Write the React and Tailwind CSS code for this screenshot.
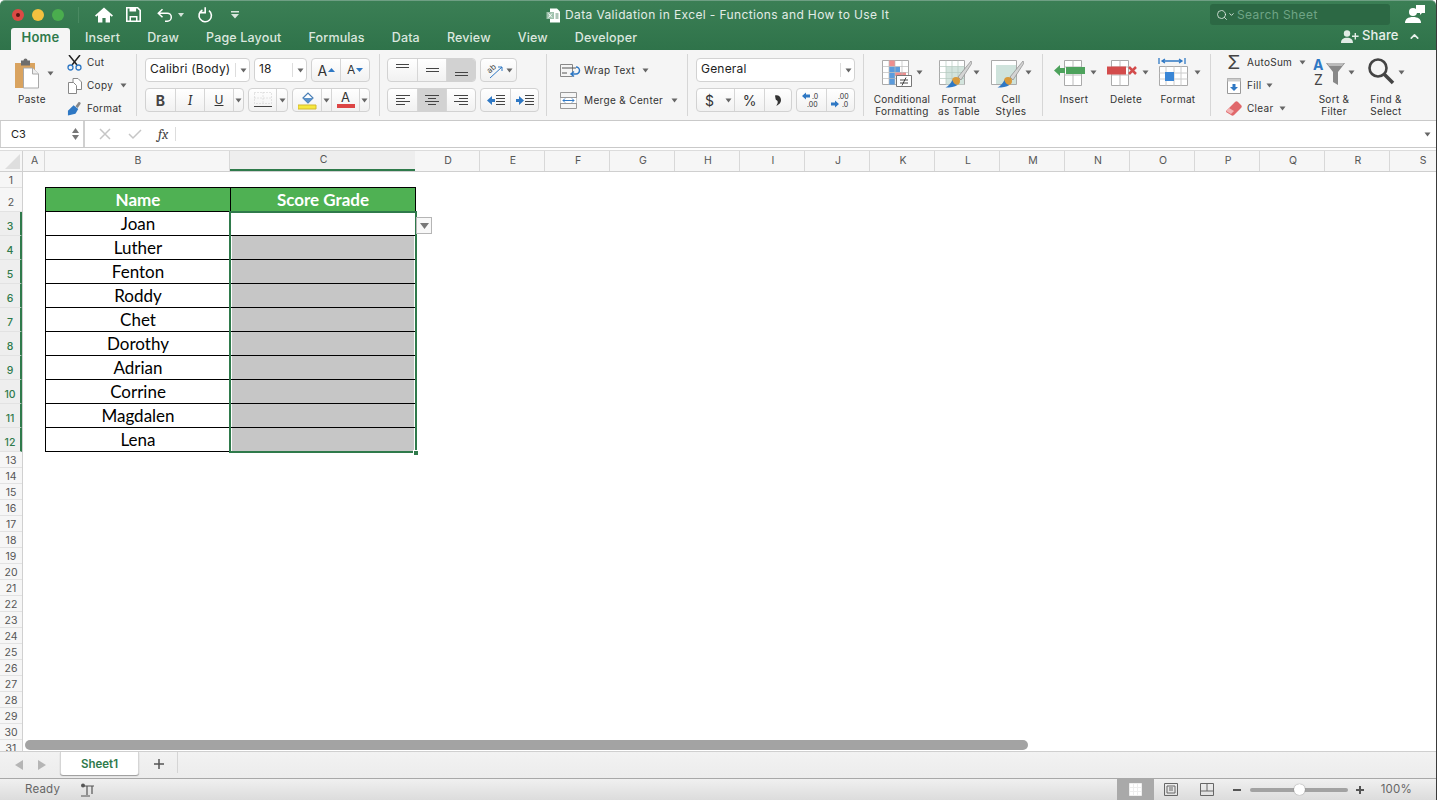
import React from 'react';
import { ChevronUp, Search, ChevronDown } from 'lucide-react';

const names = ['Joan', 'Luther', 'Fenton', 'Roddy', 'Chet', 'Dorothy', 'Adrian', 'Corrine', 'Magdalen', 'Lena'];
const tabs = ['Insert', 'Draw', 'Page Layout', 'Formulas', 'Data', 'Review', 'View', 'Developer'];
const narrowCols = ['D', 'E', 'F', 'G', 'H', 'I', 'J', 'K', 'L', 'M', 'N', 'O', 'P', 'Q', 'R', 'S'];
const rows = Array.from({ length: 31 }, (_, i) => i + 1);

const Caret = ({ className = '' }) => (
  <svg width="7" height="5" viewBox="0 0 7 5" className={className}>
    <path d="M0.5 0.5h6L3.5 4.5z" fill="#666" />
  </svg>
);

const Seg = ({ children, className = '' }) => (
  <div className={`flex items-center justify-center h-full border-l border-[#d6d6d6] first:border-l-0 ${className}`}>{children}</div>
);

const Group = ({ children, className = '' }) => (
  <div className={`flex h-[24px] rounded-[4px] border border-[#d2d2d2] bg-gradient-to-b from-white to-[#f1f1f1] overflow-hidden ${className}`}>{children}</div>
);

const Select = ({ label, className = '' }) => (
  <div className={`flex items-center h-[24px] rounded-[4px] border border-[#d2d2d2] bg-white pl-[4px] text-[12px] tracking-[0.2px] text-[#222] ${className}`}>
    <span className="flex-1 pb-[2px]">{label}</span>
    <div className="flex items-center justify-center w-[14px] h-[14px] border-l border-[#ddd]"><Caret className="ml-[2px]" /></div>
  </div>
);

const Lines = ({ rowsOf }) => (
  <svg width="16" height="14" viewBox="0 0 16 14" stroke="#444" strokeWidth="1">
    {rowsOf.map((r, i) => <path key={i} d={`M${r[0]} ${i * 3 + 2.5}H${r[1]}`} />)}
  </svg>
);

const SmallTool = ({ icon, label, caret }) => (
  <div className="flex items-center h-[23px] shrink-0">
    <div className="flex justify-center w-[15px]">{icon}</div>
    <span className="ml-[5px] text-[10px] tracking-[0.3px] text-[#333]">{label}</span>
    {caret && <Caret className="ml-[7px]" />}
  </div>
);

const BigTool = ({ icon, label, width, gap = 'ml-[3px]' }) => (
  <div className={`flex flex-col items-center ${width}`}>
    <div className="flex items-center h-[36px] shrink-0">
      {icon}
      <Caret className={gap} />
    </div>
    <div className="mt-[3px] shrink-0 text-center text-[10px] leading-[12px] tracking-[0.3px] text-[#333] whitespace-pre">{label}</div>
  </div>
);

const MiniGrid = ({ width = 36, children }) => (
  <svg width={width} height="32" viewBox={`0 0 ${width} 32`}>{children}</svg>
);

const TitleBar = () => (
  <div className="flex items-center h-[27px] relative">
    <div className="flex items-center gap-[8px] pl-[12px]">
      <div className="flex items-center justify-center w-[12px] h-[12px] rounded-full bg-[#dd4a45]"><div className="w-[4px] h-[4px] rounded-full bg-[#5a1513]" /></div>
      <div className="w-[12px] h-[12px] rounded-full bg-[#f4c13f]" />
      <div className="w-[12px] h-[12px] rounded-full bg-[#4aad4e]" />
    </div>
    <div className="ml-[14px] h-[16px] border-l border-[#4a8a62]" />
    <svg width="18" height="16" viewBox="0 0 18 16" className="ml-[16px]" fill="#fff">
      <path d="M9 .5L0 8.5l1.2 1.2L3 8.2V15.5h4.4v-4.600h3.200v4.600H15V8.200l1.800 1.500L18 8.500z" />
    </svg>
    <svg width="15" height="15" viewBox="0 0 15 15" className="ml-[13px]">
      <path d="M.8.8h10.800L14.200 3.400v10.800H.8z" fill="none" stroke="#fff" strokeWidth="1.600" />
      <path d="M3.500 1h6.600v3.600H3.500zM3.500 9h8v5h-8z" fill="#fff" />
      <path d="M5 10.500h5v3H5z" fill="#357a4f" />
    </svg>
    <svg width="16" height="14" viewBox="0 0 16 14" className="ml-[16px]" fill="none" stroke="#fff" strokeWidth="1.500">
      <path d="M5.500 1.200L1.300 5.200l4.200 4M1.500 5.200h8.800a4 4 0 0 1 0 8H8" />
    </svg>
    <svg width="6" height="4" viewBox="0 0 6 4" className="ml-[5px]"><path d="M0 0h6L3 4z" fill="#d5e3da" /></svg>
    <svg width="16" height="16" viewBox="0 0 16 16" className="ml-[13px]" fill="none" stroke="#fff" strokeWidth="1.600">
      <path d="M5.400 3A6.200 6.200 0 1 0 12 3.600M8.200 .2v5.400H2.800" />
    </svg>
    <svg width="8" height="8" viewBox="0 0 8 8" className="ml-[18px]" fill="#d9e6de"><path d="M0 0h8v1.400H0zM0 3h8L4 7.500z" /></svg>

    <div className="absolute left-[546px] top-[5px] flex items-center">
      <svg width="15" height="15" viewBox="0 0 15 15" className="mr-[4px]">
        <path d="M4 .5h7l3 3v11H4z" fill="#fff" />
        <path d="M.5 4h7.500v7H.5z" fill="#9fc2ad" />
        <path d="M2.500 5.500l3.500 4M6 5.500l-3.500 4" stroke="#fff" />
        <path d="M9.500 6h3M9.500 8h3M9.500 10h3" stroke="#5d8a70" />
      </svg>
      <span className="text-[12px] tracking-[0.38px] text-[#e2ece6]">Data Validation in Excel - Functions and How to Use It</span>
    </div>

    <div className="absolute left-[1210px] top-[3px] flex items-center w-[180px] h-[21px] rounded-[3px] bg-[#2c6844] pl-[6px]">
      <Search size={12} color="#e8f0eb" strokeWidth={1.600} />
      <ChevronDown size={7} color="#e8f0eb" strokeWidth={3} />
      <span className="ml-[2px] text-[12px] tracking-[0.4px] text-[#6fa586]">Search Sheet</span>
    </div>
    <svg width="20" height="19" viewBox="0 0 20 19" className="absolute left-[1405px] top-[4px]" fill="#fff">
      <path d="M11 0h9v8h-3l-2 2V8h-4z" />
      <circle cx="8" cy="7" r="4" />
      <path d="M0 18c0-4 3-6 8-6s8 2 8 6z" />
    </svg>
  </div>
);

const TabRow = () => (
  <div className="flex items-end h-[22px] pl-[11px] relative">
    <div className="flex items-center justify-center w-[59px] h-[22px] pb-[2px] rounded-t-[3px] bg-[#f5f5f5] text-[13px] font-semibold tracking-[0.2px] text-[#2f7a4b]">Home</div>
    <div className="flex items-center h-[22px] pb-[2px] ml-[15px] gap-[27px] text-[12.5px] font-medium tracking-[0.15px] text-[#dbe7df]">
      {tabs.map((t) => <span key={t}>{t}</span>)}
    </div>
    <div className="absolute left-[1341px] top-[-2px] flex items-center h-[20px] text-[13px] font-medium tracking-[0.1px] text-[#e8f0eb]">
      <svg width="18" height="13" viewBox="0 0 18 13" className="mr-[3px]" fill="#e2ece6">
        <circle cx="6" cy="3.500" r="3.200" />
        <path d="M0 13c0-3.600 2.400-5.200 6-5.200s6 1.600 6 5.200zM13.600 3h1.400v2.600h2.600v1.400H15v2.600h-1.400V7H11V5.600h2.600z" />
      </svg>
      <span>Share</span>
      <ChevronUp size={13} strokeWidth={3} color="#e8f0eb" className="ml-[9px]" />
    </div>
  </div>
);

const Clipboard = () => (
  <div className="flex w-[137px] h-[62px] mt-[4px] border-r border-[#d6d6d6]">
    <div className="flex flex-col w-[59px] pl-[14px]">
      <div className="flex items-center h-[34px] mt-[2px] shrink-0">
        <svg width="28" height="31" viewBox="0 0 28 31">
          <path d="M1 5h20v25H1z" fill="#d9a35f" />
          <path d="M7 2.500h2.500a2 2 0 0 1 4 0H16v5H7z" fill="#6d6d6d" />
          <path d="M9.500 10h9l6 6v14h-15z" fill="#fff" stroke="#a9a9a9" />
          <path d="M18.500 10v6h6" fill="#eee" stroke="#a9a9a9" />
        </svg>
        <Caret className="ml-[5px]" />
      </div>
      <span className="mt-[3px] ml-[4px] text-[10px] leading-[12px] tracking-[0.3px] text-[#333]">Paste</span>
    </div>
    <div className="flex flex-col ml-[8px] mt-[-3px]">
      <SmallTool label="Cut" icon={
        <svg width="15" height="16" viewBox="0 0 15 16" fill="none">
          <path d="M2 0l8 10M13 0L5 10" stroke="#222" strokeWidth="1.500" />
          <circle cx="3.500" cy="12.500" r="2.500" stroke="#2f78c4" strokeWidth="1.300" />
          <circle cx="11.500" cy="12.500" r="2.500" stroke="#2f78c4" strokeWidth="1.300" />
        </svg>
      } />
      <SmallTool label="Copy" caret icon={
        <svg width="14" height="16" viewBox="0 0 14 16" fill="#fff" stroke="#888">
          <path d="M5 .5h5l3.500 3.500v7.500H5z" />
          <path d="M.5 4.500h5l3 3v8h-8z" />
        </svg>
      } />
      <SmallTool label="Format" icon={
        <svg width="16" height="15" viewBox="0 0 16 15">
          <path d="M9 5l3-4c1-1 3 0 2.500 1.500L11.500 7z" fill="#888" />
          <path d="M1 10l6-6 5 4-3 5-8 2z" fill="#2f78c4" />
        </svg>
      } />
    </div>
  </div>
);

const FontGroup = () => (
  <div className="flex flex-col gap-[6px] w-[243px] h-[62px] mt-[4px] pt-[4px] pl-[8px] border-r border-[#d6d6d6]">
    <div className="flex gap-[4px]">
      <Select label="Calibri (Body)" className="w-[105px]" />
      <Select label="18" className="w-[53px]" />
      <Group className="w-[59px]">
        <Seg className="w-[29px] text-[14px] text-[#333]">A<svg width="7" height="4" viewBox="0 0 7 4" className="ml-[1px]"><path d="M0 4L3.500 0 7 4z" fill="#2f78c4" /></svg></Seg>
        <Seg className="w-[29px] text-[12px] text-[#333]">A<svg width="7" height="4" viewBox="0 0 7 4" className="ml-[1px]"><path d="M0 0l3.500 4L7 0z" fill="#2f78c4" /></svg></Seg>
      </Group>
    </div>
    <div className="flex">
      <Group className="w-[99px]">
        <Seg className="w-[29px] text-[14px] font-bold text-[#444]">B</Seg>
        <Seg className="w-[29px] text-[14px] italic font-serif text-[#333]">I</Seg>
        <Seg className="w-[29px] text-[12px] underline text-[#333]">U</Seg>
        <Seg className="flex-1"><Caret /></Seg>
      </Group>
      <Group className="w-[40px] ml-[4px]">
        <Seg className="w-[27px]">
          <svg width="18" height="16" viewBox="0 0 18 16">
            <path d="M.5 .5h17v11H.5zM9 .5v11M.5 6h17" fill="none" stroke="#ccc" strokeDasharray="1 2" />
            <path d="M0 14.500h18" stroke="#444" />
          </svg>
        </Seg>
        <Seg className="flex-1"><Caret /></Seg>
      </Group>
      <Group className="w-[78px] ml-[4px]">
        <Seg className="w-[28px]">
          <svg width="19" height="19" viewBox="0 0 19 19">
            <path d="M5 7l5-5 5 5-5 5z" fill="#fff" stroke="#4a7fb5" strokeWidth="1.200" />
            <path d="M5 7h10l-5 5z" fill="#5b92c9" />
            <path d="M0 14h18v4H0z" fill="#f6e83c" stroke="#d4b92e" />
          </svg>
        </Seg>
        <Seg className="w-[10px]"><Caret /></Seg>
        <Seg className="w-[28px] relative">
          <span className="text-[13px] leading-[13px] mb-[6px] text-[#333]">A</span>
          <div className="absolute left-[5px] bottom-[3px] w-[18px] h-[4px] bg-[#dc4444]" />
        </Seg>
        <Seg className="flex-1"><Caret /></Seg>
      </Group>
    </div>
  </div>
);

const AlignGroup = () => (
  <div className="flex flex-col gap-[6px] w-[167px] h-[62px] mt-[4px] pt-[4px] pl-[7px] border-r border-[#d6d6d6]">
    <div className="flex gap-[4px]">
      <Group className="w-[89px]">
        <Seg className="w-[29px] !items-start pt-[5px]"><svg width="13" height="5"><path d="M0 .5h13M0 3.500h13" stroke="#444" /></svg></Seg>
        <Seg className="w-[29px]"><svg width="13" height="5"><path d="M0 .5h13M0 3.500h13" stroke="#444" /></svg></Seg>
        <Seg className="flex-1 !items-end pb-[4px] bg-[#d2d2d2]"><svg width="13" height="5"><path d="M0 .5h13M0 3.500h13" stroke="#444" /></svg></Seg>
      </Group>
      <Group className="w-[37px]">
        <div className="flex items-center justify-center w-full gap-[3px]">
          <svg width="18" height="18" viewBox="0 0 18 18" fill="none">
            <text x="2" y="10" transform="rotate(-40 7 8)" fontSize="8" fill="#444" fontFamily="Inter">ab</text>
            <path d="M5 17L17 6M17 6h-4M17 6v4" stroke="#2f78c4" />
          </svg>
          <Caret />
        </div>
      </Group>
    </div>
    <div className="flex gap-[4px]">
      <Group className="w-[89px]">
        <Seg className="w-[29px]"><Lines rowsOf={[[1, 15], [1, 10], [1, 15], [1, 10]]} /></Seg>
        <Seg className="w-[29px] bg-[#d2d2d2]"><Lines rowsOf={[[1, 15], [4, 12], [1, 15], [4, 12]]} /></Seg>
        <Seg className="flex-1"><Lines rowsOf={[[1, 15], [6, 15], [1, 15], [6, 15]]} /></Seg>
      </Group>
      <Group className="w-[59px]">
        <Seg className="w-[29px]">
          <svg width="18" height="13" viewBox="0 0 18 13"><path d="M0 6.500L5 2v3h3v3H5v3z" fill="#2f78c4" /><path d="M9 1.500h9M9 4.500h9M9 7.500h9M9 10.500h9" stroke="#444" /></svg>
        </Seg>
        <Seg className="flex-1">
          <svg width="18" height="13" viewBox="0 0 18 13"><path d="M8 6.500L3 2v3H0v3h3v3z" fill="#2f78c4" /><path d="M9 1.500h9M9 4.500h9M9 7.500h9M9 10.500h9" stroke="#444" /></svg>
        </Seg>
      </Group>
    </div>
  </div>
);

const WrapGroup = () => (
  <div className="flex flex-col w-[141px] h-[62px] mt-[4px] pt-[5px] pl-[13px] border-r border-[#d6d6d6] text-[10px] tracking-[0.35px] text-[#333]">
    <div className="flex items-center h-[23px]">
      <svg width="21" height="15" viewBox="0 0 21 15" fill="none">
        <path d="M.5 1.500h12v12H.5z" stroke="#888" />
        <path d="M2 5h14M2 10h5" stroke="#555" />
        <path d="M16 4a3.500 3.500 0 0 1 0 7h-4M14 8.500L11 11l3 2.500" stroke="#2f78c4" strokeWidth="1.500" />
      </svg>
      <span className="ml-[3px]">Wrap Text</span>
      <Caret className="ml-[7px]" />
    </div>
    <div className="flex items-center h-[23px] mt-[7px]">
      <svg width="17" height="17" viewBox="0 0 17 17" fill="none" className="mr-[7px]">
        <path d="M.5 .5h16v16H.5zM.5 5.500h16M.5 11.500h16" stroke="#999" />
        <path d="M.5 6h16v5H.5z" fill="#fff" />
        <path d="M3 8.500h11M5 6.500l-2 2 2 2M12 6.500l2 2-2 2" stroke="#2f78c4" />
      </svg>
      <span>Merge &amp; Center</span>
      <Caret className="ml-[8px]" />
    </div>
  </div>
);

const NumberGroup = () => (
  <div className="flex flex-col gap-[6px] w-[176px] h-[62px] mt-[4px] pt-[4px] pl-[8px] border-r border-[#d6d6d6]">
    <Select label="General" className="w-[159px]" />
    <div className="flex gap-[4px]">
      <Group className="w-[96px]">
        <Seg className="w-[25px] text-[14px] text-[#333]">$</Seg>
        <Seg className="w-[12px] !border-l-0"><Caret /></Seg>
        <Seg className="w-[30px] text-[14px] text-[#333]">%</Seg>
        <Seg className="flex-1">
          <svg width="6" height="11" viewBox="0 0 6 11"><path d="M0 .5c3-1 6 1 6 4.500S3 10 1 11c1.500-2 2-3.500 1.500-5C2 5 .5 5 .5 3.500z" fill="#333" /></svg>
        </Seg>
      </Group>
      <Group className="w-[59px]">
        <Seg className="w-[29px]">
          <svg width="20" height="16" viewBox="0 0 20 16"><path d="M0 4l4-3.500V2.500h4v3H4v2z" fill="#2f78c4" /><text x="10" y="7" fontSize="7" fill="#333" fontFamily="Inter">.0</text><text x="5" y="15" fontSize="7" fill="#333" fontFamily="Inter">.00</text></svg>
        </Seg>
        <Seg className="flex-1">
          <svg width="20" height="16" viewBox="0 0 20 16"><text x="7" y="7" fontSize="7" fill="#333" fontFamily="Inter">.00</text><path d="M8 12L4 8.500V10.500H0v3h4v2z" fill="#2f78c4" /><text x="11" y="15" fontSize="7" fill="#333" fontFamily="Inter">.0</text></svg>
        </Seg>
      </Group>
    </div>
  </div>
);

const brush = (
  <g>
    <path d="M33 5L20 21l3 3L34 7z" fill="#d4d4d4" stroke="#8a8a8a" strokeWidth=".7" />
    <circle cx="18" cy="25" r="4" fill="#d89a3c" />
    <path d="M14.500 24c.5 3 2.500 4.500 5 5-3 2-7 2.500-12 2.500 3-1.500 5-4 7-7.500z" fill="#2f78c4" />
  </g>
);

const StylesGroup = () => (
  <div className="flex w-[179px] h-[62px] mt-[4px] pl-[7px] border-r border-[#d6d6d6]">
    <BigTool width="w-[62px]" gap="ml-[3px]" label={'Conditional\nFormatting'} icon={
      <MiniGrid width={32}>
        <path d="M1.500 4.500h26v24h-26z" fill="#fff" stroke="#aaa" />
        <path d="M8 4.500h6v6H8z" fill="#ee8e8e" /><path d="M8 10.500h11v6H8z" fill="#5b9bdc" /><path d="M8 16.500h6v12H8z" fill="#5b9bdc" /><path d="M14 16h11v4H14z" fill="#ee8e8e" />
        <path d="M8 4.500v24M14 4.500v24M21 4.500v24M1.500 10.500h26M1.500 16.500h26M1.500 22.500h26" stroke="#bbb" strokeWidth=".7" />
        <path d="M15.500 19.500h15v11h-15z" fill="#fff" stroke="#777" />
        <path d="M19 24h8M19 27h8M25 21.500l-4 8" stroke="#333" strokeWidth=".9" />
      </MiniGrid>
    } />
    <BigTool width="w-[52px]" gap="ml-[1px]" label={'Format\nas Table'} icon={
      <MiniGrid width={34}>
        <path d="M1.500 4.500h25v24h-25z" fill="#fff" stroke="#aaa" />
        <path d="M8 10.500h18v18H8z" fill="#d3e4dd" />
        <path d="M8 4.500v24M14 4.500v24M20 4.500v24M1.500 10.500h25M1.500 16.500h25M1.500 22.500h25" stroke="#b4c9be" strokeWidth=".7" />
        {brush}
      </MiniGrid>
    } />
    <BigTool width="w-[52px]" gap="ml-[1px]" label={'Cell\nStyles'} icon={
      <MiniGrid width={34}>
        <path d="M1.500 4.500h25v24h-25z" fill="#fff" stroke="#aaa" />
        <path d="M6 9h20v19H6z" fill="#cfe3dc" />
        {brush}
      </MiniGrid>
    } />
  </div>
);

const CellsGroup = () => (
  <div className="flex w-[168px] h-[62px] mt-[4px] pl-[5px] border-r border-[#d6d6d6]">
    <BigTool width="w-[52px]" label="Insert" icon={
      <MiniGrid>
        <path d="M13.500 4.500h17v25h-17z" fill="#fff" stroke="#aaa" />
        <path d="M13.500 11h17M13.500 19h17M22 4.500v25" stroke="#bbb" />
        <path d="M15 11h19v7H15z" fill="#4da25c" />
        <path d="M3 14.500L9 9v3h5v5H9v3z" fill="#4da25c" />
      </MiniGrid>
    } />
    <BigTool width="w-[52px]" label="Delete" icon={
      <MiniGrid>
        <path d="M8.500 4.500h17v25h-17z" fill="#fff" stroke="#aaa" />
        <path d="M8.500 11h17M8.500 19h17M17 4.500v25" stroke="#bbb" />
        <path d="M4 10.500h19v8H4z" fill="#d34c4c" />
        <path d="M26 11l7 7M33 11l-7 7" stroke="#d34c4c" strokeWidth="2.500" />
      </MiniGrid>
    } />
    <BigTool width="w-[52px]" label="Format" icon={
      <MiniGrid>
        <path d="M4 2v6M30 2v6M7 5h20M10 3L7 5l3 2M24 3l3 2-3 2" stroke="#2f78c4" strokeWidth="1.300" fill="none" />
        <path d="M4.500 10.500h28v19h-28z" fill="#fff" stroke="#aaa" />
        <path d="M4.500 17h28M4.500 23h28M11 10.500v19M19 10.500v19M26 10.500v19" stroke="#ccc" />
        <path d="M10 16h9v9h-9z" fill="#3a86d6" />
      </MiniGrid>
    } />
  </div>
);

const EditGroup = () => (
  <div className="flex flex-1 h-[62px] mt-[4px] pl-[15px]">
    <div className="flex flex-col w-[82px] mt-[-3px] text-[10px] tracking-[0.3px] text-[#333]">
      <div className="flex items-center h-[23px] shrink-0">
        <div className="flex justify-center w-[16px] text-[19px] leading-none text-[#444]">Σ</div>
        <span className="ml-[5px]">AutoSum</span><Caret className="ml-[7px]" />
      </div>
      <div className="flex items-center h-[23px] shrink-0">
        <svg width="14" height="16" viewBox="0 0 14 16" className="ml-[1px]">
          <path d="M.5 .5h13v15H.5z" fill="#fff" stroke="#999" />
          <path d="M.5 .5h13v3H.5z" fill="#ccc" />
          <path d="M7 13L3 9h2.500V6h3v3H11z" fill="#2f78c4" />
        </svg>
        <span className="ml-[6px]">Fill</span><Caret className="ml-[5px]" />
      </div>
      <div className="flex items-center h-[23px] shrink-0">
        <svg width="16" height="15" viewBox="0 0 16 15">
          <path d="M0 10L9 1c1-1 2-1 3 0l3 3c1 1 1 2 0 3l-7 7c-1 1-2 1-3 0l-5-3z" fill="#e0686b" />
          <path d="M0 10l5 3 3-3-5-3z" fill="#f3b4b4" />
        </svg>
        <span className="ml-[5px]">Clear</span><Caret className="ml-[5px]" />
      </div>
    </div>
    <BigTool width="w-[52px]" label={'Sort &\nFilter'} icon={
      <svg width="32" height="30" viewBox="0 0 32 30">
        <text x="0" y="13" fontSize="14" fontWeight="700" fill="#2f78c4" fontFamily="Inter">A</text>
        <text x="1" y="28" fontSize="14" fill="#444" fontFamily="Inter">Z</text>
        <path d="M13 6h19l-7 9v13l-5-3V15z" fill="#888" />
        <path d="M14 6h17l-2 3H16z" fill="#bbb" />
      </svg>
    } />
    <BigTool width="w-[52px]" label={'Find &\nSelect'} icon={
      <svg width="28" height="30" viewBox="0 0 28 30" fill="none">
        <circle cx="11" cy="11" r="8.500" stroke="#444" strokeWidth="2.600" />
        <path d="M17 17l9 9" stroke="#444" strokeWidth="3.500" />
      </svg>
    } />
  </div>
);

const Ribbon = () => (
  <div className="flex h-[71px] shrink-0 bg-[#f5f5f5] border-b border-[#c9c9c9]">
    <Clipboard />
    <FontGroup />
    <AlignGroup />
    <WrapGroup />
    <NumberGroup />
    <StylesGroup />
    <CellsGroup />
    <EditGroup />
  </div>
);

const FormulaBar = () => (
  <div className="flex items-center h-[27px] shrink-0 bg-white border-b border-[#c9c9c9]">
    <div className="flex items-center justify-between w-[85px] h-full pl-[10px] pr-[4px] border-r-2 border-l border-[#d0d0d0] text-[11px] text-[#222]">
      <span>C3</span>
      <div className="flex flex-col gap-[2px]">
        <svg width="7" height="5"><path d="M0 5l3.500-5L7 5z" fill="#777" /></svg>
        <svg width="7" height="5"><path d="M0 0l3.500 5L7 0z" fill="#777" /></svg>
      </div>
    </div>
    <svg width="12" height="12" viewBox="0 0 12 12" className="ml-[14px]"><path d="M1 1l10 10M11 1L1 11" stroke="#c6c6c6" strokeWidth="1.500" /></svg>
    <svg width="14" height="11" viewBox="0 0 14 11" className="ml-[17px]"><path d="M1 5l4 4 8-8" stroke="#c6c6c6" strokeWidth="1.500" fill="none" /></svg>
    <span className="ml-[16px] font-serif italic text-[14px] text-[#444]">fx</span>
    <div className="ml-[7px] h-[14px] border-l border-[#ddd]" />
    <div className="flex-1" />
    <Caret className="mr-[5px]" />
  </div>
);

const ColHead = ({ label, className = '' }) => (
  <div className={`flex items-center justify-center shrink-0 h-full pl-[2px] border-r border-[#d8d8d8] text-[10.5px] text-[#555] ${className}`}>{label}</div>
);

const ColumnHeader = () => (
  <div className="flex h-[22px] shrink-0 mt-[2px] bg-[#f6f6f6] border-t border-[#dcdcdc] border-b border-b-[#cfcfcf]">
    <div className="flex items-end justify-end w-[23px] shrink-0 pb-[2px] pr-[2px] border-r border-[#d0d0d0]">
      <svg width="15" height="15"><path d="M15 0v15H0z" fill="#dedede" /></svg>
    </div>
    <ColHead label="A" className="w-[22px]" />
    <ColHead label="B" className="w-[185px]" />
    <ColHead label="C" className="w-[185px] bg-[#eeeeee] !border-r-0 border-b-2 !border-b-[#2f7a4b] text-[#2f7a4b]" />
    {narrowCols.map((c) => <ColHead key={c} label={c} className="w-[65px]" />)}
  </div>
);

const RowHeader = () => (
  <div className="w-[23px] shrink-0 bg-[#f6f6f6] border-r border-[#d0d0d0]">
    {rows.map((n) => {
      const tall = n >= 2 && n <= 12;
      const sel = n >= 3 && n <= 12;
      return (
        <div key={n} className={`flex justify-center border-b border-[#e2e2e2] text-[10.5px] leading-[14px] ${tall ? 'h-[24px] items-end pb-[1px]' : 'h-[16px] items-center pt-[2px]'} ${sel ? 'bg-[#eeeeee] border-r-2 border-r-[#2f7a4b] font-medium text-[#2f7a4b]' : 'text-[#555]'}`}>{n}</div>
      );
    })}
  </div>
);

const DataTable = () => (
  <div className="ml-[22px] mt-[15px] w-[371px] border-t border-l border-black font-['Lato','Carlito',sans-serif] text-[17px] text-black">
    <div className="flex h-[24px] bg-[#4fb153] border-b border-black font-bold text-white">
      <div className="flex items-center justify-center w-[185px] border-r border-black">Name</div>
      <div className="flex items-center justify-center w-[185px] border-r border-black">Score Grade</div>
    </div>
    {names.map((name, i) => (
      <div key={name} className="flex h-[24px] border-b border-black">
        <div className="flex items-center justify-center w-[185px] border-r border-black">{name}</div>
        <div className="w-[185px] border-r border-black px-[1px]">
          {i > 0 && <div className="h-full bg-[#c6c6c6]" />}
        </div>
      </div>
    ))}
  </div>
);

const Sheet = () => (
  <div className="flex-1 relative overflow-hidden bg-white">
    <DataTable />
    {/* selection box, drop-down and scrollbar sit over the cells */}
    <div className="absolute left-[206px] top-[39px] w-[188px] h-[242px] border-2 border-[#2f7a4b]" />
    <div className="absolute left-[390px] top-[278px] w-[6px] h-[6px] bg-[#2f7a4b] border border-white" />
    <div className="absolute left-[393px] top-[45px] flex items-center justify-center w-[16px] h-[17px] bg-[#f8f8f8] border border-[#b5b5b5]">
      <svg width="9" height="6"><path d="M0 0h9L4.500 6z" fill="#777" /></svg>
    </div>
    <div className="absolute left-[2px] top-[568px] w-[1003px] h-[10px] rounded-full bg-[#a3a3a3]" />
  </div>
);

const SheetTabs = () => (
  <div className="flex items-start h-[27px] bg-gradient-to-b from-[#f2f2f2] to-[#ececec] border-t border-[#cfcfcf] shrink-0">
    <svg width="8" height="10" viewBox="0 0 8 10" className="ml-[15px] mt-[8px]"><path d="M8 0v10L0 5z" fill="#b5b5b5" /></svg>
    <svg width="8" height="10" viewBox="0 0 8 10" className="ml-[15px] mt-[8px]"><path d="M0 0v10l8-5z" fill="#b5b5b5" /></svg>
    <div className="flex items-center justify-center w-[79px] h-[23px] pt-[2px] ml-[14px] bg-white rounded-b-[3px] shadow-[0_1px_1px_#999] border-x border-[#d5d5d5] text-[11.5px] font-semibold text-[#2f7a4b]">Sheet1</div>
    <svg width="10" height="10" viewBox="0 0 10 10" className="ml-[15px] mt-[7px]"><path d="M5 0v10M0 5h10" stroke="#555" strokeWidth="1.500" /></svg>
    <div className="ml-[13px] h-[21px] border-l border-[#d5d5d5]" />
  </div>
);

const StatusBar = () => (
  <div className="flex items-center h-[22px] shrink-0 bg-gradient-to-b from-[#f0f0f0] to-[#dcdcdc] border-t border-[#a8a8a8] text-[11.5px] tracking-[0.2px] text-[#666]">
    <span className="ml-[25px]">Ready</span>
    <svg width="15" height="14" viewBox="0 0 15 14" className="ml-[20px]" fill="none" stroke="#555" strokeWidth="1.200">
      <path d="M3 3h11M12 3v8M7 3v9M1 13h9" />
      <circle cx="3" cy="2.500" r="2" fill="#555" stroke="none" />
    </svg>
    <div className="flex-1" />
    <div className="flex items-center justify-center w-[37px] h-full bg-[#a9a9a9]">
      <svg width="13" height="13" viewBox="0 0 13 13" fill="#fff" stroke="#eee"><path d="M.5 .5h12v12H.5zM4.500 .5v12M8.500 .5v12M.5 4.500h12M.5 8.500h12" /></svg>
    </div>
    <svg width="14" height="13" viewBox="0 0 14 13" className="ml-[10px]" fill="none" stroke="#666"><path d="M.5 .5h13v12H.5zM3 3h8v7H3zM5 5h4M5 7h4" /></svg>
    <svg width="14" height="13" viewBox="0 0 14 13" className="ml-[22px]" fill="none" stroke="#666"><path d="M.5 .5h13v12H.5zM.5 8h13M7 .5V8" /></svg>
    <svg width="8" height="2" className="ml-[19px]"><path d="M0 1h8" stroke="#555" strokeWidth="2" /></svg>
    <div className="relative ml-[9px] w-[98px] h-[4px] rounded-full bg-[#a2a2a2]">
      <div className="absolute left-[44px] top-[-4px] w-[11px] h-[11px] rounded-full bg-white shadow-[0_0_1px_#666]" />
    </div>
    <svg width="8" height="8" className="ml-[8px]"><path d="M4 0v8M0 4h8" stroke="#555" strokeWidth="2" /></svg>
    <span className="ml-[17px] mr-[24px]">100%</span>
  </div>
);

const App = () => {
  return (
    <div className="flex flex-col w-[1437px] h-[800px] overflow-hidden bg-white border-r border-r-[#3a3a3a] font-['Inter','Liberation_Sans',sans-serif]">
      <div className="h-[50px] shrink-0 rounded-t-[5px] border-t border-[#6f9f84] bg-gradient-to-b from-[#3b7f55] to-[#2f734a]">
        <TitleBar />
        <TabRow />
      </div>
      <Ribbon />
      <FormulaBar />
      <ColumnHeader />
      <div className="flex flex-1 min-h-0 overflow-hidden">
        <RowHeader />
        <Sheet />
      </div>
      <SheetTabs />
      <StatusBar />
    </div>
  );
};

export default App;
